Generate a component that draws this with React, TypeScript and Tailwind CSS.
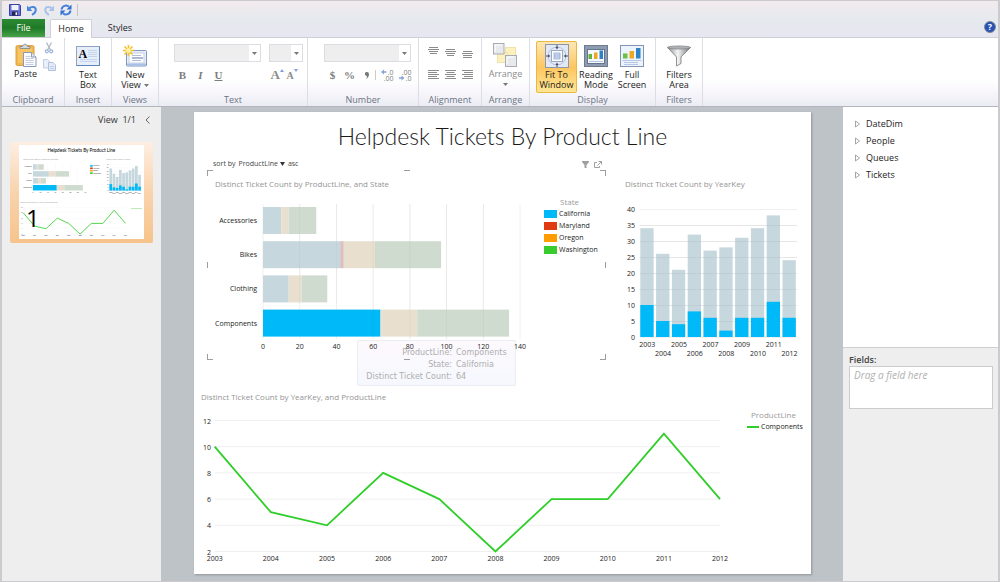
import type { ReactNode, SVGProps } from "react";

const STATES = [
	{ name: "California", color: "#00b9f9", muted: "#c6d7de" },
	{ name: "Maryland", color: "#e03a12", muted: "#dcbfc0" },
	{ name: "Oregon", color: "#ff9c00", muted: "#e8dfcf" },
	{ name: "Washington", color: "#38cc2f", muted: "#cfdbcf" },
];

const PRODUCT_LINES = [
	{ name: "Accessories", values: [10, 0, 4, 15], active: false },
	{ name: "Bikes", values: [42, 2, 17, 36], active: false },
	{ name: "Clothing", values: [14, 0, 7, 14], active: false },
	{ name: "Components", values: [64, 0, 20, 50], active: true },
];

const YEARS = [
	{ year: 2003, total: 34, components: 10 },
	{ year: 2004, total: 26, components: 5 },
	{ year: 2005, total: 21, components: 4 },
	{ year: 2006, total: 32, components: 8 },
	{ year: 2007, total: 27, components: 6 },
	{ year: 2008, total: 28, components: 2 },
	{ year: 2009, total: 31, components: 6 },
	{ year: 2010, total: 34, components: 6 },
	{ year: 2011, total: 38, components: 11 },
	{ year: 2012, total: 24, components: 6 },
];

const TABLES = ["DateDim", "People", "Queues", "Tickets"];

const AXIS_TEXT = "fill-[#1c1c1c] text-[7px] font-['Open_Sans','Noto_Sans',sans-serif]";

/* ---------- charts ---------- */

const ProductLineChart = (props: SVGProps<SVGSVGElement>) => {
	const x = (value: number) => 56 + value * 1.836;

	return (
		<svg viewBox="0 0 337 158" {...props}>
			{[0, 20, 40, 60, 80, 100, 120, 140].map((tick) => (
				<g key={tick}>
					<rect x={x(tick) - 0.5} y={8} width={1} height={135} fill="#f0f0f0" />
					<text x={x(tick)} y={153} textAnchor="middle" className={AXIS_TEXT}>
						{tick}
					</text>
				</g>
			))}
			{PRODUCT_LINES.map((line, row) => {
				const y = 11 + row * 34.2;
				return (
					<g key={line.name}>
						<text x={50} y={y + 16} textAnchor="end" className={AXIS_TEXT}>
							{line.name}
						</text>
						{line.values.map((value, i) => {
							const before = line.values.slice(0, i).reduce((a, b) => a + b, 0);
							const state = STATES[i];
							return (
								<rect
									key={state.name}
									x={x(before)}
									y={y}
									width={value * 1.836}
									height={27}
									fill={line.active && i === 0 ? state.color : state.muted}
								/>
							);
						})}
					</g>
				);
			})}
			{[20, 40, 60, 80, 100, 120].map((tick) => (
				<rect
					key={tick}
					x={x(tick) - 0.5}
					y={8}
					width={1}
					height={tick < 60 ? 100 : 135}
					fill="#000"
					opacity={0.03}
				/>
			))}
		</svg>
	);
};

const YearChart = (props: SVGProps<SVGSVGElement>) => (
	<svg viewBox="0 0 174 164" {...props}>
		{[0, 5, 10, 15, 20, 25, 30, 35, 40].map((tick) => (
			<g key={tick}>
				<rect x={15} y={141 - tick * 3.2} width={157} height={1} fill="#f0f0f0" />
				<text x={10} y={144 - tick * 3.2} textAnchor="end" className={AXIS_TEXT}>
					{tick}
				</text>
			</g>
		))}
		{YEARS.map((item, i) => {
			const x = 15.3 + i * 15.8;
			return (
				<g key={item.year}>
					<rect x={x} y={141 - item.total * 3.2} width={13.3} height={item.total * 3.2} fill="#c6d7de" />
					<text x={x + 7} y={i % 2 ? 160 : 151} textAnchor="middle" className={AXIS_TEXT}>
						{item.year}
					</text>
				</g>
			);
		})}
		{[5, 10, 15, 20, 25, 30, 35].map((tick) => (
			<rect key={tick} x={15} y={141 - tick * 3.2} width={157} height={1} fill="#000" opacity={0.04} />
		))}
		{YEARS.map((item, i) => (
			<rect
				key={item.year}
				x={15.3 + i * 15.8}
				y={141 - item.components * 3.2}
				width={13.3}
				height={item.components * 3.2}
				fill="#00b9f9"
			/>
		))}
	</svg>
);

const TrendChart = (props: SVGProps<SVGSVGElement>) => {
	const x = (i: number) => 13.7 + i * 56.15;
	const y = (value: number) => 148.5 - (value - 2) * 13.1;

	return (
		<svg viewBox="0 0 530 160" {...props}>
			{[2, 4, 6, 8, 10, 12].map((tick) => (
				<g key={tick}>
					<rect x={14} y={y(tick) - 0.5} width={505} height={1} fill="#f0f0f0" />
					<text x={10} y={y(tick) + 3} textAnchor="end" className={AXIS_TEXT}>
						{tick}
					</text>
				</g>
			))}
			<polyline
				points={YEARS.map((item, i) => `${x(i)},${y(item.components)}`).join(" ")}
				fill="none"
				stroke="#2fce28"
				strokeWidth={1.8}
			/>
			{YEARS.map((item, i) => (
				<text key={item.year} x={x(i)} y={158} textAnchor="middle" className={AXIS_TEXT}>
					{item.year}
				</text>
			))}
		</svg>
	);
};

const Thumbnail = () => (
	<svg viewBox="0 0 617 462" className="block w-full bg-white [&_polyline]:[stroke-width:4]" aria-hidden="true">
		<text x={308} y={34} textAnchor="middle" className="fill-black text-[23px] font-[Lato,sans-serif]">
			Helpdesk Tickets By Product Line
		</text>
		<g className="fill-[#888] text-[8px] font-['Open_Sans',sans-serif]">
			<text x={21} y={75}>Distinct Ticket Count by ProductLine, and State</text>
			<text x={431} y={75}>Distinct Ticket Count by YearKey</text>
			<text x={7} y={288}>Distinct Ticket Count by YearKey, and ProductLine</text>
		</g>
		<ProductLineChart x={13} y={84} width={337} height={158} />
		<YearChart x={431} y={84} width={174} height={164} />
		<TrendChart x={7} y={291} width={530} height={160} />
		{STATES.map((state, i) => (
			<g key={state.name}>
				<rect x={351} y={99 + i * 12} width={13} height={8} fill={state.color} />
				<text x={366} y={106 + i * 12} className={AXIS_TEXT}>{state.name}</text>
			</g>
		))}
		<rect x={553} y={313} width={54} height={3} fill="#8fe08a" />
	</svg>
);

/* ---------- icons ---------- */

const SaveIcon = () => (
	<svg viewBox="0 0 12 12" className="size-3">
		<path d="M.5.5h10l1 1v10H.5z" fill="#6a72d8" stroke="#3c40a6" />
		<rect x="2.500" y="1" width="7" height="5" fill="#eef2fc" />
		<rect x="3" y="7.500" width="6" height="4" fill="#23264f" />
		<rect x="6.500" y="8.300" width="1.700" height="2.600" fill="#fff" />
	</svg>
);

const UndoIcon = ({ color }: { color: string }) => (
	<svg viewBox="0 0 12 12" className="size-3">
		<path d="M3 4.500C5 2.300 9.800 2 9.800 5.800c0 2.200-1.500 3.900-3.800 5" fill="none" stroke={color} strokeWidth="2" />
		<path d="M1 1.500v5.500h5.500z" fill={color} />
	</svg>
);

const RefreshIcon = () => (
	<svg viewBox="0 0 12 12" className="size-3">
		<path d="M1.500 5.500A4.500 4.500 0 0 1 9 2.800M10.500 6.500A4.500 4.500 0 0 1 3 9.200" fill="none" stroke="#3f7fd8" strokeWidth="2" />
		<path d="M11.500.5v5h-5zM.5 11.500v-5h5z" fill="#2f6fd0" />
	</svg>
);

const PasteIcon = () => (
	<svg viewBox="0 0 22 24" className="h-6 w-[22px]">
		<rect x="1" y="2.500" width="18" height="20" rx="1.500" fill="#f3b74a" stroke="#dba049" />
		<rect x="3" y="5" width="14" height="15" fill="#f8c566" />
		<path d="M5 5.500V3.500h2.500C8 .5 12 .5 12.500 3.500H15v2z" fill="#d5d9de" stroke="#7b8188" strokeWidth=".8" />
		<path d="M8.500 9.500h8l4.500 4.500v9.500H8.500z" fill="#fafbfe" stroke="#8b9ab5" />
		<path d="M16.500 9.500v4.500H21" fill="#dde4f0" stroke="#7c8aa5" strokeWidth=".8" />
		<path d="M10.500 13.500h5M10.500 15.500h8M10.500 17.500h8M10.500 19.500h8M10.500 21.500h8" stroke="#b9c4d8" strokeWidth=".8" />
	</svg>
);

const CutIcon = () => (
	<svg viewBox="0 0 12 12" className="size-3">
		<path d="M3.500.5l4 7.500M8.500.5l-4 7.500" stroke="#b0b8c4" strokeWidth="1.300" />
		<circle cx="3.800" cy="9.300" r="1.500" fill="none" stroke="#9ab2dc" strokeWidth="1.200" />
		<circle cx="8.200" cy="9.300" r="1.500" fill="none" stroke="#9ab2dc" strokeWidth="1.200" />
	</svg>
);

const CopyIcon = () => (
	<svg viewBox="0 0 13 12" className="h-3 w-[13px]">
		<path d="M.5.5h4l2.500 2.500v6H.5z" fill="#eaf0fa" stroke="#c0cde4" />
		<path d="M5.500 3.500H10l2.500 2.500v5.500h-7z" fill="#e3ebf8" stroke="#b0c1de" />
		<path d="M7 7.500h4M7 9.500h4" stroke="#b9c8e2" strokeWidth=".8" />
	</svg>
);

const TextBoxIcon = () => (
	<svg viewBox="0 0 24 22" className="h-[22px] w-6">
		<rect x=".5" y="1.500" width="23" height="19" fill="#e6eefa" stroke="#93a4c1" />
		<path d="M.5 20.500h23v-19" fill="none" stroke="#5e84bd" />
		<path d="M12 5.500h9M12 7.500h9M12 9.500h9M12 11.500h9M4 14.500h17M4 16.500h17" stroke="#c4d4ec" />
		<text x="2.500" y="13" className="fill-black text-[12px] font-bold font-['Liberation_Serif',serif]">A</text>
	</svg>
);

const NewViewIcon = () => (
	<svg viewBox="0 0 24 22" className="h-[22px] w-6">
		<rect x="3.500" y="5.500" width="20" height="15.500" rx="1" fill="#e8eef8" stroke="#7f97be" />
		<rect x="6" y="8" width="15" height="10" fill="#fff" stroke="#b7c5dd" strokeWidth=".8" />
		<path d="M4 19.500h19" stroke="#a6c0e6" strokeWidth="2" />
		<path d="M9 10.500h9M9 15.500h9" stroke="#b0bdd4" />
		<path d="M9 13h11" stroke="#8fa2c4" strokeWidth="1.500" />
		<path d="M5.500 0v11M0 5.500h11M1.500 1.500l8 8M9.500 1.500l-8 8" stroke="#f5c02a" strokeWidth="1.600" />
		<circle cx="5.500" cy="5.500" r="2.400" fill="#fff3a0" />
	</svg>
);

const ArrangeIcon = () => (
	<svg viewBox="0 0 24 24" className="size-6">
		<rect x="12.500" y="4.500" width="10" height="10" fill="#fdf1bd" stroke="#f0e2ad" />
		<rect x="4.500" y="9.500" width="10" height="10" fill="#fdf1bd" stroke="#f0e2ad" />
		<rect x=".5" y=".5" width="10.500" height="10.500" fill="#e7e9ed" stroke="#a9acb2" />
		<rect x="12.500" y="12.500" width="11" height="11" fill="#e7e9ed" stroke="#a9acb2" />
		<path d="M2 9V2h7M14 21v-7h7" fill="none" stroke="#fff" />
	</svg>
);

const FitIcon = () => (
	<svg viewBox="0 0 24 24" className="size-6">
		<rect x=".5" y=".5" width="23" height="23" fill="#e3e9f4" stroke="#8b97ad" />
		<circle cx="12" cy="12" r="9" fill="none" stroke="#b3c1dc" />
		<rect x="6.500" y="6.500" width="11" height="11" fill="#fff" stroke="#9aa9c6" />
		<rect x="9" y="9" width="6" height="6" fill="#dbe5f6" stroke="#8fa6ce" strokeWidth=".8" />
		<path d="M9 11h6M9 13h6" stroke="#8fa6ce" strokeWidth=".8" />
		<path d="M12 1v3M12 20v3M1 12h3M20 12h3" stroke="#44506a" />
		<path d="M10.500 3h3L12 5.500zM10.500 21h3L12 18.500zM3 10.500v3L5.500 12zM21 10.500v3L18.500 12z" fill="#44506a" />
	</svg>
);

const ReadingIcon = () => (
	<svg viewBox="0 0 24 24" className="size-6">
		<rect x=".5" y="1.500" width="23" height="21" fill="#8d9bb1" stroke="#6d7a90" />
		<rect x="3.500" y="5.500" width="17" height="14" fill="#f4f8fe" stroke="#66758e" />
		<rect x="4.500" y="10" width="3.500" height="5" fill="#62b53b" />
		<rect x="10" y="8.500" width="3.500" height="6.500" fill="#eda722" />
		<rect x="15.500" y="6.500" width="3.500" height="8.500" fill="#2f83c4" />
		<path d="M5 17.500h14" stroke="#b5c7e4" />
	</svg>
);

const FullScreenIcon = () => (
	<svg viewBox="0 0 24 24" className="size-6">
		<rect x=".5" y="1.500" width="23" height="21" fill="#edf3fc" stroke="#8496b4" />
		<rect x="3" y="9.500" width="4.500" height="5" fill="#6bbf42" />
		<rect x="9.500" y="7" width="4.500" height="7.500" fill="#eda722" />
		<rect x="16" y="4" width="4.500" height="10.500" fill="#2f83c4" />
		<path d="M2.500 16.500h19M4 18.500h14M4 20.500h14" stroke="#b5c7e4" />
	</svg>
);

const FilterIcon = () => (
	<svg viewBox="0 0 24 22" className="h-[22px] w-6">
		<defs>
			<linearGradient id="funnel">
				<stop offset="0" stopColor="#8b8d90" />
				<stop offset=".45" stopColor="#f5f5f5" />
				<stop offset="1" stopColor="#6f7174" />
			</linearGradient>
		</defs>
		<path d="M.5 2.500L9.500 12v9l4.500-2.500V12L23.500 2.500z" fill="url(#funnel)" stroke="#77797c" strokeWidth=".8" />
		<ellipse cx="12" cy="2.500" rx="11.500" ry="1.600" fill="#aeb0b3" stroke="#77797c" strokeWidth=".6" />
	</svg>
);

const AlignIcon = ({ widths, side }: { widths: number[]; side: "left" | "center" | "right" }) => (
	<svg viewBox={`0 0 11 ${widths.length * 2}`} width={11} height={widths.length * 2}>
		{widths.map((width, i) => (
			<rect
				key={i}
				x={side === "left" ? 0 : side === "right" ? 11 - width : (11 - width) / 2}
				y={i * 2}
				width={width}
				height={1}
				fill="#8b8b8b"
			/>
		))}
	</svg>
);

const DecimalIcon = ({ top, bottom, left }: { top: string; bottom: string; left: boolean }) => (
	<svg viewBox="0 0 13 12" className="h-3 w-[13px]">
		<g className="fill-[#808080] text-[7px] font-['Open_Sans',sans-serif]" textAnchor="end">
			<text x="12.500" y="5.500">{top}</text>
			<text x="12.500" y="11.500">{bottom}</text>
		</g>
		{left ? (
			<path d="M0 3l3-2.500v1.800h2.500v1.500H3v1.700z" fill="#86a4dc" />
		) : (
			<path d="M5.500 9l-3-2.500v1.800H0v1.500h2.500v1.700z" fill="#86a4dc" />
		)}
	</svg>
);

const Caret = () => (
	<svg viewBox="0 0 5 3" className="h-[3px] w-[5px]">
		<path d="M0 0h5L2.500 3z" fill="#777" />
	</svg>
);

/* ---------- ribbon ---------- */

interface RibbonGroupProps {
	label: string;
	className: string;
	children: ReactNode;
}

const RibbonGroup = ({ label, className, children }: RibbonGroupProps) => (
	<section className={`flex shrink-0 flex-col border-r border-[#dcdee6] ${className}`}>
		<div className="flex flex-1 justify-center pt-[3px]">{children}</div>
		<h2 className="text-center text-[9px] leading-3 font-medium text-[#6b7482]">{label}</h2>
	</section>
);

interface BigButtonProps {
	icon: ReactNode;
	lines: string[];
	className?: string;
	caret?: boolean;
}

const BigButton = ({ icon, lines, className = "", caret = false }: BigButtonProps) => (
	<button type="button" className={`flex h-[52px] flex-col items-center rounded-xs text-[9px] leading-[10px] font-medium ${className}`}>
		<span className={`flex items-center ${lines.length === 1 ? "h-7" : "h-[29px]"}`}>{icon}</span>
		{lines.map((line, i) => (
			<span key={line} className="flex items-center gap-[3px]">
				{line}
				{caret && i > 0 && <Caret />}
			</span>
		))}
		{caret && lines.length === 1 && (
			<span className="flex h-[10px] items-center">
				<Caret />
			</span>
		)}
	</button>
);

const Combo = ({ label, className }: { label: string; className: string }) => (
	<div className={`relative h-[18px] ${className}`}>
		<select aria-label={label} className="size-full appearance-none border border-[#dcdce2] bg-[#eeeeee]">
			<option />
		</select>
		<span className="pointer-events-none absolute inset-y-px right-px flex w-[11px] items-center justify-center bg-white">
			<Caret />
		</span>
	</div>
);

const GLYPH_BUTTON = "flex h-4 items-center justify-center text-[11px] font-bold text-[#7d7d7d] font-['Liberation_Serif',serif]";

const Ribbon = () => (
	<div className="flex h-[69px] border-t border-[#cfd0d6] bg-linear-to-b from-white from-60% via-[#faf8fc] via-75% to-[#ebecf4]">
		<RibbonGroup label="Clipboard" className="w-[63px]">
			<BigButton icon={<PasteIcon />} lines={["Paste"]} className="ml-1" />
			<div className="mt-px ml-[6px] flex flex-col gap-[5px]">
				<button type="button" aria-label="Cut"><CutIcon /></button>
				<button type="button" aria-label="Copy"><CopyIcon /></button>
			</div>
		</RibbonGroup>
		<RibbonGroup label="Insert" className="w-[47px]">
			<BigButton icon={<TextBoxIcon />} lines={["Text", "Box"]} />
		</RibbonGroup>
		<RibbonGroup label="Views" className="w-[47px]">
			<BigButton icon={<NewViewIcon />} lines={["New", "View"]} caret />
		</RibbonGroup>
		<RibbonGroup label="Text" className="w-[149px]">
			<div className="mt-[3px] ml-[10px] flex flex-col gap-[5px]">
				<div className="flex gap-2">
					<Combo label="Font" className="w-[87px]" />
					<Combo label="Font size" className="w-[34px]" />
				</div>
				<div className="flex">
					<button type="button" className={`w-[18px] ${GLYPH_BUTTON}`}>B</button>
					<button type="button" className={`w-[18px] italic ${GLYPH_BUTTON}`}>I</button>
					<button type="button" className={`w-[18px] underline ${GLYPH_BUTTON}`}>U</button>
					<button type="button" aria-label="Grow font" className="ml-auto flex h-4 w-4 items-start">
						<span className="text-[13px] leading-4 font-bold text-[#8a8a8a] font-['Liberation_Serif',serif]">A</span>
						<svg viewBox="0 0 4 3" className="mt-[2px] h-[3px] w-1"><path d="M0 3h4L2 0z" fill="#7f9fe0" /></svg>
					</button>
					<button type="button" aria-label="Shrink font" className="flex h-4 w-4 items-start">
						<span className="text-[10px] leading-[18px] font-bold text-[#8a8a8a] font-['Liberation_Serif',serif]">A</span>
						<svg viewBox="0 0 4 3" className="mt-[2px] h-[3px] w-1"><path d="M0 0h4L2 3z" fill="#7f9fe0" /></svg>
					</button>
				</div>
			</div>
		</RibbonGroup>
		<RibbonGroup label="Number" className="w-[111px]">
			<div className="mt-[3px] ml-[10px] flex flex-col gap-[5px]">
				<Combo label="Number format" className="w-[87px]" />
				<div className="flex items-center">
					<button type="button" className={`w-[17px] ${GLYPH_BUTTON}`}>$</button>
					<button type="button" className={`w-[17px] ${GLYPH_BUTTON}`}>%</button>
					<button type="button" aria-label="Thousands separator" className={`w-[17px] ${GLYPH_BUTTON}`}>
						<svg viewBox="0 0 4 7" className="h-[7px] w-1"><path d="M2 0a2 2 0 0 1 2 2c0 2-1 4-3 5 .8-1 1-2 .8-3A2 2 0 0 1 2 0z" fill="#777" /></svg>
					</button>
					<span className="h-[10px] w-px bg-[#ccc]" />
					<button type="button" aria-label="Increase decimal" className="ml-[5px]"><DecimalIcon top=".0" bottom=".00" left /></button>
					<button type="button" aria-label="Decrease decimal" className="ml-[5px]"><DecimalIcon top=".00" bottom=".0" left={false} /></button>
				</div>
			</div>
		</RibbonGroup>
		<RibbonGroup label="Alignment" className="w-[63px]">
			<div className="mt-[6px] flex flex-col gap-[11px]">
				<div className="flex h-3 gap-[6px]">
					<button type="button" aria-label="Align top" className="self-start"><AlignIcon widths={[9, 11, 9, 7]} side="center" /></button>
					<button type="button" aria-label="Align middle" className="self-center"><AlignIcon widths={[9, 11, 9, 7]} side="center" /></button>
					<button type="button" aria-label="Align bottom" className="self-end"><AlignIcon widths={[9, 11, 9, 9]} side="center" /></button>
				</div>
				<div className="flex gap-[6px]">
					<button type="button" aria-label="Align left"><AlignIcon widths={[11, 9, 11, 9, 11]} side="left" /></button>
					<button type="button" aria-label="Align center"><AlignIcon widths={[11, 8, 11, 8, 11]} side="center" /></button>
					<button type="button" aria-label="Align right"><AlignIcon widths={[11, 9, 11, 9, 11]} side="right" /></button>
				</div>
			</div>
		</RibbonGroup>
		<RibbonGroup label="Arrange" className="w-12">
			<BigButton icon={<ArrangeIcon />} lines={["Arrange"]} className="text-[#8b8b8b]" caret />
		</RibbonGroup>
		<RibbonGroup label="Display" className="w-[126px]">
			<BigButton
				icon={<FitIcon />}
				lines={["Fit To", "Window"]}
				className="w-[41px] bg-linear-to-b from-[#fde9b8] via-[#fdc660] to-[#fee795] outline outline-[#eab83f] -outline-offset-1"
			/>
			<BigButton icon={<ReadingIcon />} lines={["Reading", "Mode"]} className="w-[38px]" />
			<BigButton icon={<FullScreenIcon />} lines={["Full", "Screen"]} className="w-[34px]" />
		</RibbonGroup>
		<RibbonGroup label="Filters" className="w-[47px]">
			<BigButton icon={<FilterIcon />} lines={["Filters", "Area"]} />
		</RibbonGroup>
	</div>
);

const TitleBar = () => (
	<header className="bg-linear-to-b from-[#f2eaed] via-[#e6eaee] to-[#e6e6f0]">
		<div className="flex h-[18px] items-center gap-[5px] pl-[7px]">
			<button type="button" aria-label="Save"><SaveIcon /></button>
			<button type="button" aria-label="Undo"><UndoIcon color="#4a86da" /></button>
			<button type="button" aria-label="Redo" className="-scale-x-100"><UndoIcon color="#a9c4e8" /></button>
			<button type="button" aria-label="Refresh"><RefreshIcon /></button>
			<span className="h-3 w-px bg-[#c3c4ca]" />
		</div>
		<nav className="flex h-[18px] items-end text-[9px] leading-[18px] font-medium">
			<button type="button" className="h-[18px] w-[43px] bg-linear-to-b from-[#2c8a33] via-[#1f7a27] to-[#47a34a] text-white">
				File
			</button>
			<button type="button" className="relative z-10 -mb-px ml-[5px] h-[19px] w-[42px] rounded-t-xs border border-b-0 border-[#cfd0d6] bg-white">
				Home
			</button>
			<button type="button" className="ml-[7px] h-[18px] w-[42px]">Styles</button>
			<button
				type="button"
				aria-label="Help"
				className="mr-[2px] mb-1 ml-auto flex size-3 items-center justify-center rounded-full border border-[#8b8b8b] bg-[#2450b8] text-[9px] font-bold text-white"
			>
				?
			</button>
		</nav>
	</header>
);

/* ---------- report sheet ---------- */

const CHART_TITLE = "text-[8px] leading-3 text-[#949494]";

const SelectionHandles = () => (
	<div className="pointer-events-none absolute inset-0 *:absolute *:border-[#9d9d9d]">
		<i className="top-0 left-0 size-[6px] border-t border-l" />
		<i className="top-0 left-1/2 w-[6px] -translate-x-1/2 border-t" />
		<i className="top-0 right-0 size-[6px] border-t border-r" />
		<i className="top-1/2 left-0 h-[6px] -translate-y-1/2 border-l" />
		<i className="top-1/2 right-0 h-[6px] -translate-y-1/2 border-r" />
		<i className="bottom-0 left-0 size-[6px] border-b border-l" />
		<i className="bottom-0 left-1/2 w-[6px] -translate-x-1/2 border-b" />
		<i className="right-0 bottom-0 size-[6px] border-r border-b" />
	</div>
);

const Tooltip = () => (
	<dl className="absolute -bottom-[26px] left-[150px] grid w-[159px] grid-cols-[94px_1fr] gap-x-1 rounded-xs border border-[#ececf3] bg-linear-to-b from-[#fdf9fd] to-[#f5f8fe] pt-[6px] pb-[2px] text-[8px] leading-3 text-[#aeaeae] font-['DejaVu_Sans',sans-serif]">
		<dt className="text-right">ProductLine:</dt>
		<dd>Components</dd>
		<dt className="text-right">State:</dt>
		<dd>California</dd>
		<dt className="text-right whitespace-nowrap">Distinct Ticket Count:</dt>
		<dd>64</dd>
	</dl>
);

const Sheet = () => (
	<main className="flex-1 self-start bg-white pb-[11px] shadow-[1px_1px_2px_#8f9498]">
		<h1 className="pt-2 text-center text-[23px] leading-8 font-light text-[#1a1a1a] font-[Lato,'Open_Sans',sans-serif]">
			Helpdesk Tickets By Product Line
		</h1>
		<div className="mt-[6px] flex gap-[19px] pr-3 pl-[13px]">
			<section className="min-w-0 flex-[399]">
				<div className="flex h-3 items-center gap-[3px] pr-1 pl-[6px] text-[7px] text-[#444]">
					<span>sort by</span>
					<button type="button" className="flex items-center gap-[2px]">
						ProductLine
						<svg viewBox="0 0 5 4" className="h-1 w-[5px]"><path d="M0 0h5L2.500 4z" fill="#333" /></svg>
					</button>
					<button type="button">asc</button>
					<button type="button" aria-label="Filter" className="ml-auto">
						<svg viewBox="0 0 7 7" className="size-[7px]"><path d="M0 0h7v1L4.500 4v3h-2V4L0 1z" fill="#a0a0a0" /></svg>
					</button>
					<button type="button" aria-label="Pop out" className="ml-[2px]">
						<svg viewBox="0 0 8 7" className="h-[7px] w-2" fill="none" stroke="#a0a0a0">
							<path d="M3 1.500H.5v5h5V5M4.500.5h3v3M7 1L3.500 4.500" />
						</svg>
					</button>
				</div>
				<div className="relative pt-2 pb-[6px]">
					<Tooltip />
					<SelectionHandles />
					<h2 className={`pl-2 ${CHART_TITLE}`}>Distinct Ticket Count by ProductLine, and State</h2>
					<div className="relative mt-[6px] flex">
						<ProductLineChart className="min-w-0 flex-[337]" />
						<div className="min-w-0 flex-[62] text-[7px] leading-3">
							<h3 className="pl-4 text-[8px] text-[#9a9a9a]">State</h3>
							<ul>
								{STATES.map((state) => (
									<li key={state.name} className="flex items-center gap-[2px]">
										<svg viewBox="0 0 13 8" className="h-2 w-[13px] shrink-0">
											<rect width="13" height="8" fill={state.color} />
										</svg>
										{state.name}
									</li>
								))}
							</ul>
						</div>
					</div>
				</div>
			</section>
			<section className="min-w-0 flex-[174] pt-5">
				<h2 className={CHART_TITLE}>Distinct Ticket Count by YearKey</h2>
				<YearChart className="mt-[6px] w-full" />
			</section>
		</div>
		<section className="mt-[31px] pr-[10px] pl-[7px]">
			<h2 className={CHART_TITLE}>Distinct Ticket Count by YearKey, and ProductLine</h2>
			<div className="flex gap-4">
				<TrendChart className="min-w-0 flex-[530]" />
				<div className="min-w-0 flex-[54] pt-[6px] text-[7px] leading-3">
					<h3 className="pl-1 text-[8px] text-[#9a9a9a]">ProductLine</h3>
					<p className="flex items-center gap-[2px]">
						<span className="h-[2px] w-3 shrink-0 bg-[#2fce28]" />
						Components
					</p>
				</div>
			</div>
		</section>
	</main>
);

const ViewsPane = () => (
	<aside className="w-[159px] shrink-0 bg-[#eeeeee] px-2">
		<div className="flex h-[26px] items-center justify-end gap-[9px] pr-[3px] text-[9px] font-medium text-[#333]">
			<span className="whitespace-pre">View  1/1</span>
			<button type="button" aria-label="Collapse views">
				<svg viewBox="0 0 5 8" className="h-2 w-[5px]" fill="none" stroke="#666">
					<path d="M4.500.5L1 4l3.500 3.500" />
				</svg>
			</button>
		</div>
		<button
			type="button"
			aria-label="View 1"
			className="relative mt-[9px] block w-full rounded-xs bg-linear-to-b from-[#fdeee3] via-[#f9d3ac] to-[#f6c48b] px-[9px] pt-[3px] pb-1"
		>
			<Thumbnail />
			<span className="absolute bottom-[9px] left-4 text-[24px] leading-[32px] text-black">1</span>
		</button>
	</aside>
);

const FieldsPane = () => (
	<aside className="flex w-[155px] shrink-0 flex-col bg-[#eeeeee]">
		<ul className="h-[241px] border-b border-[#cfcfcf] bg-white pt-2 pl-3 text-[9px] leading-[17px] font-medium">
			{TABLES.map((table) => (
				<li key={table}>
					<button type="button" className="flex items-center gap-[6px]">
						<svg viewBox="0 0 5 8" className="h-2 w-[5px]" fill="none" stroke="#a5a5a5">
							<path d="M.5 1v6L4.500 4z" />
						</svg>
						{table}
					</button>
				</li>
			))}
		</ul>
		<label htmlFor="fields" className="mt-[5px] pl-[6px] text-[9px] leading-[13px] font-semibold text-[#444]">
			Fields:
		</label>
		<textarea
			id="fields"
			placeholder="Drag a field here"
			className="mr-[5px] ml-[6px] h-[43px] resize-none border border-[#cccccc] bg-white px-1 text-[10px] leading-4 italic placeholder:text-[#b0b0b0]"
		/>
	</aside>
);

export default function App() {
	return (
		<div className="flex min-h-screen flex-col border-x-2 border-y border-[#cbcbcf] bg-[#eeeeee] text-[#1c1c1c] font-['Open_Sans','Noto_Sans',sans-serif]">
			<TitleBar />
			<Ribbon />
			<div className="flex flex-1 border-t border-[#b3b5bd] bg-[#bdc3c7]">
				<ViewsPane />
				<div className="flex min-w-0 flex-1 pt-[5px] pr-8 pb-[6px] pl-[33px]">
					<Sheet />
				</div>
				<FieldsPane />
			</div>
		</div>
	);
}
